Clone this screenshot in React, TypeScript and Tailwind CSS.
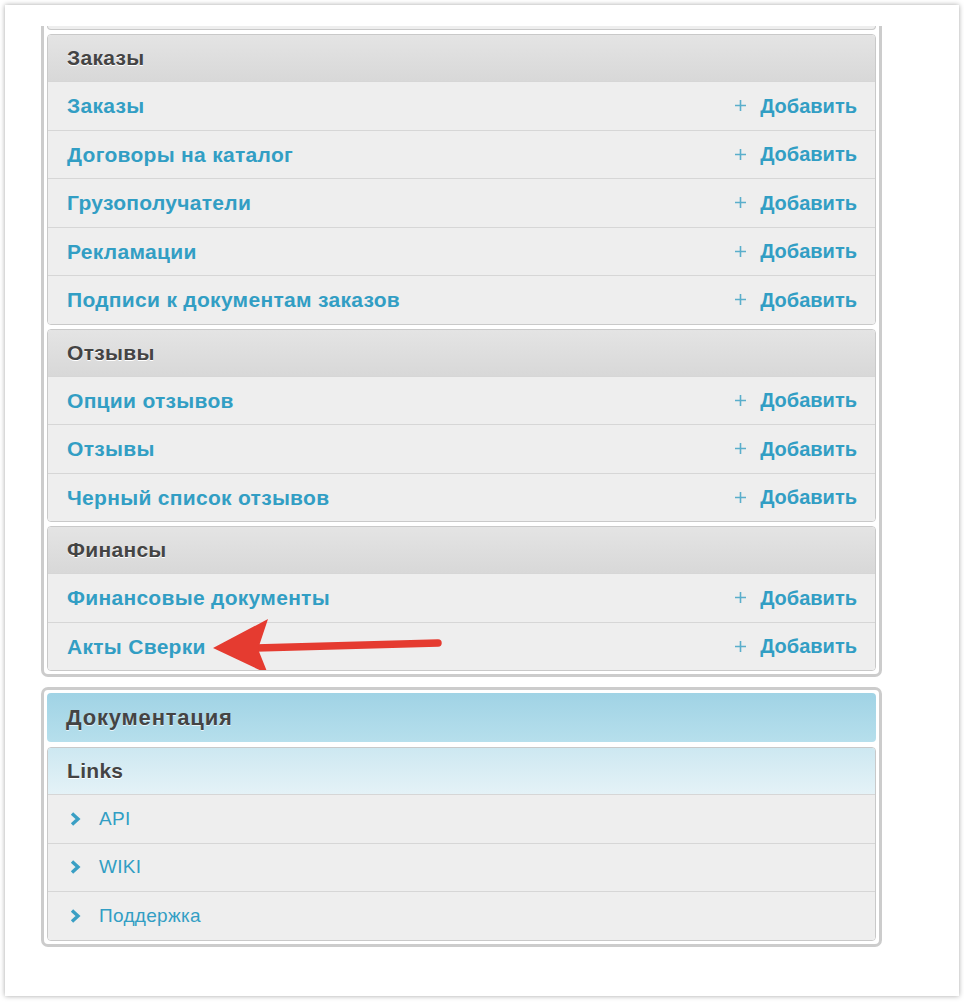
import React from 'react';

type Group = {
  title: string;
  items: string[];
};

const groups: Group[] = [
  {
    title: 'Заказы',
    items: ['Заказы', 'Договоры на каталог', 'Грузополучатели', 'Рекламации', 'Подписи к документам заказов'],
  },
  {
    title: 'Отзывы',
    items: ['Опции отзывов', 'Отзывы', 'Черный список отзывов'],
  },
  {
    title: 'Финансы',
    items: ['Финансовые документы', 'Акты Сверки'],
  },
];

const links = ['API', 'WIKI', 'Поддержка'];

// red annotation arrow pointing at "Акты Сверки"
function Arrow() {
  return (
    <svg
      className="pointer-events-none absolute left-[150px] top-[-10px]"
      width="250"
      height="70"
      viewBox="0 0 250 70"
    >
      <line x1="58" y1="35" x2="240" y2="30" stroke="#e53b30" strokeWidth="7.5" strokeLinecap="round" />
      <polygon points="15,35 70,6 60,36 70,61" fill="#e53b30" />
    </svg>
  );
}

function PlusIcon() {
  return (
    <svg width="13" height="13" viewBox="0 0 13 13">
      <path d="M6.5 1 V12 M1 6.5 H12" stroke="#5aaecb" strokeWidth="1.6" />
    </svg>
  );
}

function GroupBox({ group }: { group: Group }) {
  return (
    <div className="overflow-hidden rounded-[4px] border border-[#c9c9c9]">
      <div className="flex h-[46px] items-center bg-gradient-to-b from-[#e4e4e4] to-[#d8d8d8] px-[19px] text-[21px] font-bold tracking-[0.3px] text-[#444] [text-shadow:0_1px_0_#fff]">
        {group.title}
      </div>
      {group.items.map((item) => (
        <div
          key={item}
          className="relative flex h-[48.5px] items-center justify-between border-t border-[#d6d6d6] bg-[#eeeeee] pl-[19px] pr-[18px] font-bold text-[#329ec4]"
        >
          <span className="text-[21px] tracking-[0.3px]">{item}</span>
          <span className="flex items-center gap-[13px] text-[20px]">
            <PlusIcon />
            <span>Добавить</span>
          </span>
          {item === 'Акты Сверки' && <Arrow />}
        </div>
      ))}
    </div>
  );
}

export default function App() {
  return (
    <div className="min-h-screen bg-white p-[5px] font-['Liberation_Sans',Arial,sans-serif]">
      <div className="h-[991px] bg-white pt-[21px] shadow-[0_0_5px_rgba(0,0,0,0.35)]">
        <div className="ml-[36px] w-[841px]">
          <div className="rounded-b-[7px] border-x-[3px] border-b-[3px] border-[#cccccc] px-[3px] pb-[3px]">
            <div className="flex flex-col gap-[4px]">
              <div className="h-[4px] rounded-b-[4px] border-x border-b border-[#c9c9c9] bg-[#eeeeee]" />
              {groups.map((g) => (
                <GroupBox key={g.title} group={g} />
              ))}
            </div>
          </div>

          <div className="mt-[10px] rounded-[7px] border-[3px] border-[#cccccc] p-[3px]">
            <div className="flex h-[49px] items-center rounded-[4px] bg-gradient-to-b from-[#a0d3e5] to-[#b6dfec] px-[19px] text-[22px] font-bold tracking-[0.8px] text-[#444] [text-shadow:0_1px_0_#e6f4f9]">
              Документация
            </div>
            <div className="mt-[5px] overflow-hidden rounded-[4px] border border-[#c9c9c9]">
              <div className="flex h-[46px] items-center bg-gradient-to-b from-[#cde8f1] to-[#e4f2f7] px-[19px] text-[21px] font-bold tracking-[0.3px] text-[#444] [text-shadow:0_1px_0_#fff]">
                Links
              </div>
              {links.map((l) => (
                <div
                  key={l}
                  className="flex h-[48.5px] items-center border-t border-[#d6d6d6] bg-[#eeeeee] pl-[22px] text-[19px] tracking-[0.3px] text-[#329ec4]"
                >
                  <svg width="11" height="14" viewBox="0 0 11 14" className="mr-[18px]">
                    <path d="M2 1.5 L8 7 L2 12.5" stroke="#3a9fc4" strokeWidth="3.4" fill="none" />
                  </svg>
                  {l}
                </div>
              ))}
            </div>
          </div>
        </div>
      </div>
    </div>
  );
}
